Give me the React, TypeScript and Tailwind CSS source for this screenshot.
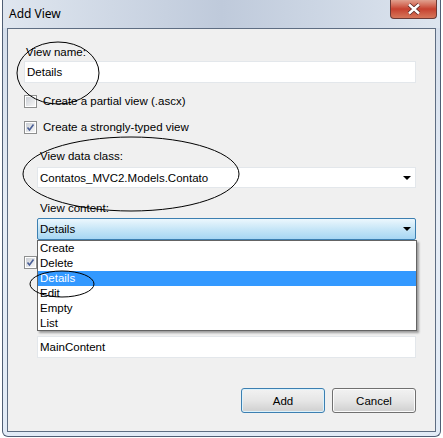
import React from "react";

function CheckBox({ checked }: { checked?: boolean }) {
  return (
    <span className="w-[13px] h-[13px] border border-[#8e8f8f] bg-white p-px shrink-0">
      <span className="w-full h-full flex items-center justify-center bg-linear-to-br from-[#cbcfd5] to-[#f7f7f7]">
        {checked && (
          <svg width="9" height="9" viewBox="0 0 9 9">
            <path d="M1.5 4.5 L3.5 7 L7.5 1.5" fill="none" stroke="#4a5f97" strokeWidth="1.6" />
          </svg>
        )}
      </span>
    </span>
  );
}

function Arrow() {
  return (
    <svg width="8" height="4" viewBox="0 0 8 4" className="shrink-0">
      <path d="M0 0 H8 L4 4 Z" fill="#000" />
    </svg>
  );
}

const items = ["Create", "Delete", "Details", "Edit", "Empty", "List"];

export default function App() {
  return (
    <div className="w-[443px] h-[438px] bg-white relative font-['Liberation_Sans',Arial,sans-serif] text-[11.5px] text-black leading-[16px]">
      {/* window */}
      <div className="ml-[2px] w-[439px] h-[437px] border-x border-b border-[#4f5e74] rounded-b-[6px] bg-linear-to-b from-[#d2dcea] via-[#e6edf6] to-[#e2ebf6] flex flex-col relative overflow-hidden">
        {/* title bar */}
        <div className="h-[28px] flex items-center pl-[6px] shrink-0 bg-linear-to-r from-[#dfe6ef] via-[#bfcadb] to-[#dde5ef]">
          <span className="text-[12px] font-['Noto_Sans',sans-serif]">Add View</span>
        </div>
        <div className="absolute top-0 right-[3px] w-[47px] h-[19px] rounded-b-[4px] border border-t-0 border-[#6b3a36] bg-linear-to-b from-[#e0a08f] via-[#c6402f] to-[#d6765a] flex items-center justify-center">
          <svg width="16" height="12" viewBox="0 0 16 12">
            <path d="M3 1.5 L13 10.5 M13 1.5 L3 10.5" stroke="#5a2a26" strokeWidth="4" />
            <path d="M3 1.5 L13 10.5 M13 1.5 L3 10.5" stroke="#fff" strokeWidth="2.4" />
          </svg>
        </div>

        {/* client panel */}
        <div className="mx-[4px] h-[404px] border border-[#5e6d82] bg-[#f0f0f0] pl-[16px] pr-[19px] flex flex-col">
          <span className="mt-[15px] ml-[2px]">View name:</span>
          <div className="mt-px h-[22px] bg-white border border-[#e3e7eb] flex items-center pl-[2px]">Details</div>

          <label className="mt-[10px] flex items-center gap-[6px]">
            <CheckBox />
            <span>Create a partial view (.ascx)</span>
          </label>
          <label className="mt-[10px] flex items-center gap-[6px]">
            <CheckBox checked />
            <span>Create a strongly-typed view</span>
          </label>

          <div className="pl-[13px] flex flex-col">
            <span className="mt-[13px] ml-[3px]">View data class:</span>
            <div className="mt-[3px] h-[21px] bg-white border border-[#e3e7eb] flex items-center justify-between pl-[2px] pr-[4px]">
              <span>Contatos_MVC2.Models.Contato</span>
              <Arrow />
            </div>

            <span className="mt-[12px] ml-[3px]">View content:</span>
            <div className="relative mt-[2px]">
              <div className="h-[22px] rounded-[2px] border border-[#3c7fb1] bg-linear-to-b from-[#ecf7fd] via-[#c7e6f7] to-[#a6d6f3] flex items-center justify-between pl-[2px] pr-[4px]">
                <span>Details</span>
                <Arrow />
              </div>
              <ul className="absolute top-full left-0 right-[-1px] z-10 h-[91px] bg-white border border-[#646464] shadow-[2px_2px_2px_rgba(0,0,0,0.35)]">
                {items.map((item) => (
                  <li
                    key={item}
                    className={
                      item === "Details"
                        ? "h-[15px] leading-[15px] pl-[2px] bg-[#3399ff] text-white"
                        : "h-[15px] leading-[15px] pl-[2px]"
                    }
                  >
                    {item}
                  </li>
                ))}
              </ul>
            </div>
          </div>

          {/* master page checkbox, its label lies under the open list */}
          <div className="mt-[14px] h-[16px] flex items-center">
            <CheckBox checked />
          </div>
          <div className="pl-[13px] flex flex-col">
            <div className="mt-[66px] h-[22px] bg-white border border-[#e3e7eb] flex items-center pl-[2px]">MainContent</div>
          </div>

          <div className="mt-[30px] flex justify-end gap-[7px]">
            <button className="w-[84px] h-[25px] rounded-[3px] border border-[#3c7fb1] bg-linear-to-b from-[#f2f2f2] via-[#e6e6e6] to-[#cfcfcf] shadow-[inset_0_0_0_1px_#dcf2fc]">
              Add
            </button>
            <button className="w-[84px] h-[25px] rounded-[3px] border border-[#707070] bg-linear-to-b from-[#f2f2f2] via-[#e6e6e6] to-[#cfcfcf] shadow-[inset_0_0_0_1px_#fbfbfb]">
              Cancel
            </button>
          </div>
        </div>
      </div>

      {/* hand drawn annotations */}
      <svg className="absolute inset-0 pointer-events-none z-20" width="443" height="438" viewBox="0 0 443 438">
        <ellipse cx="58" cy="73" rx="41" ry="31" fill="none" stroke="#000" strokeWidth="1" />
        <ellipse cx="131" cy="174" rx="108" ry="37" fill="none" stroke="#000" strokeWidth="1" />
        <ellipse cx="62" cy="284" rx="32" ry="13" fill="none" stroke="#000" strokeWidth="1" />
      </svg>
    </div>
  );
}
